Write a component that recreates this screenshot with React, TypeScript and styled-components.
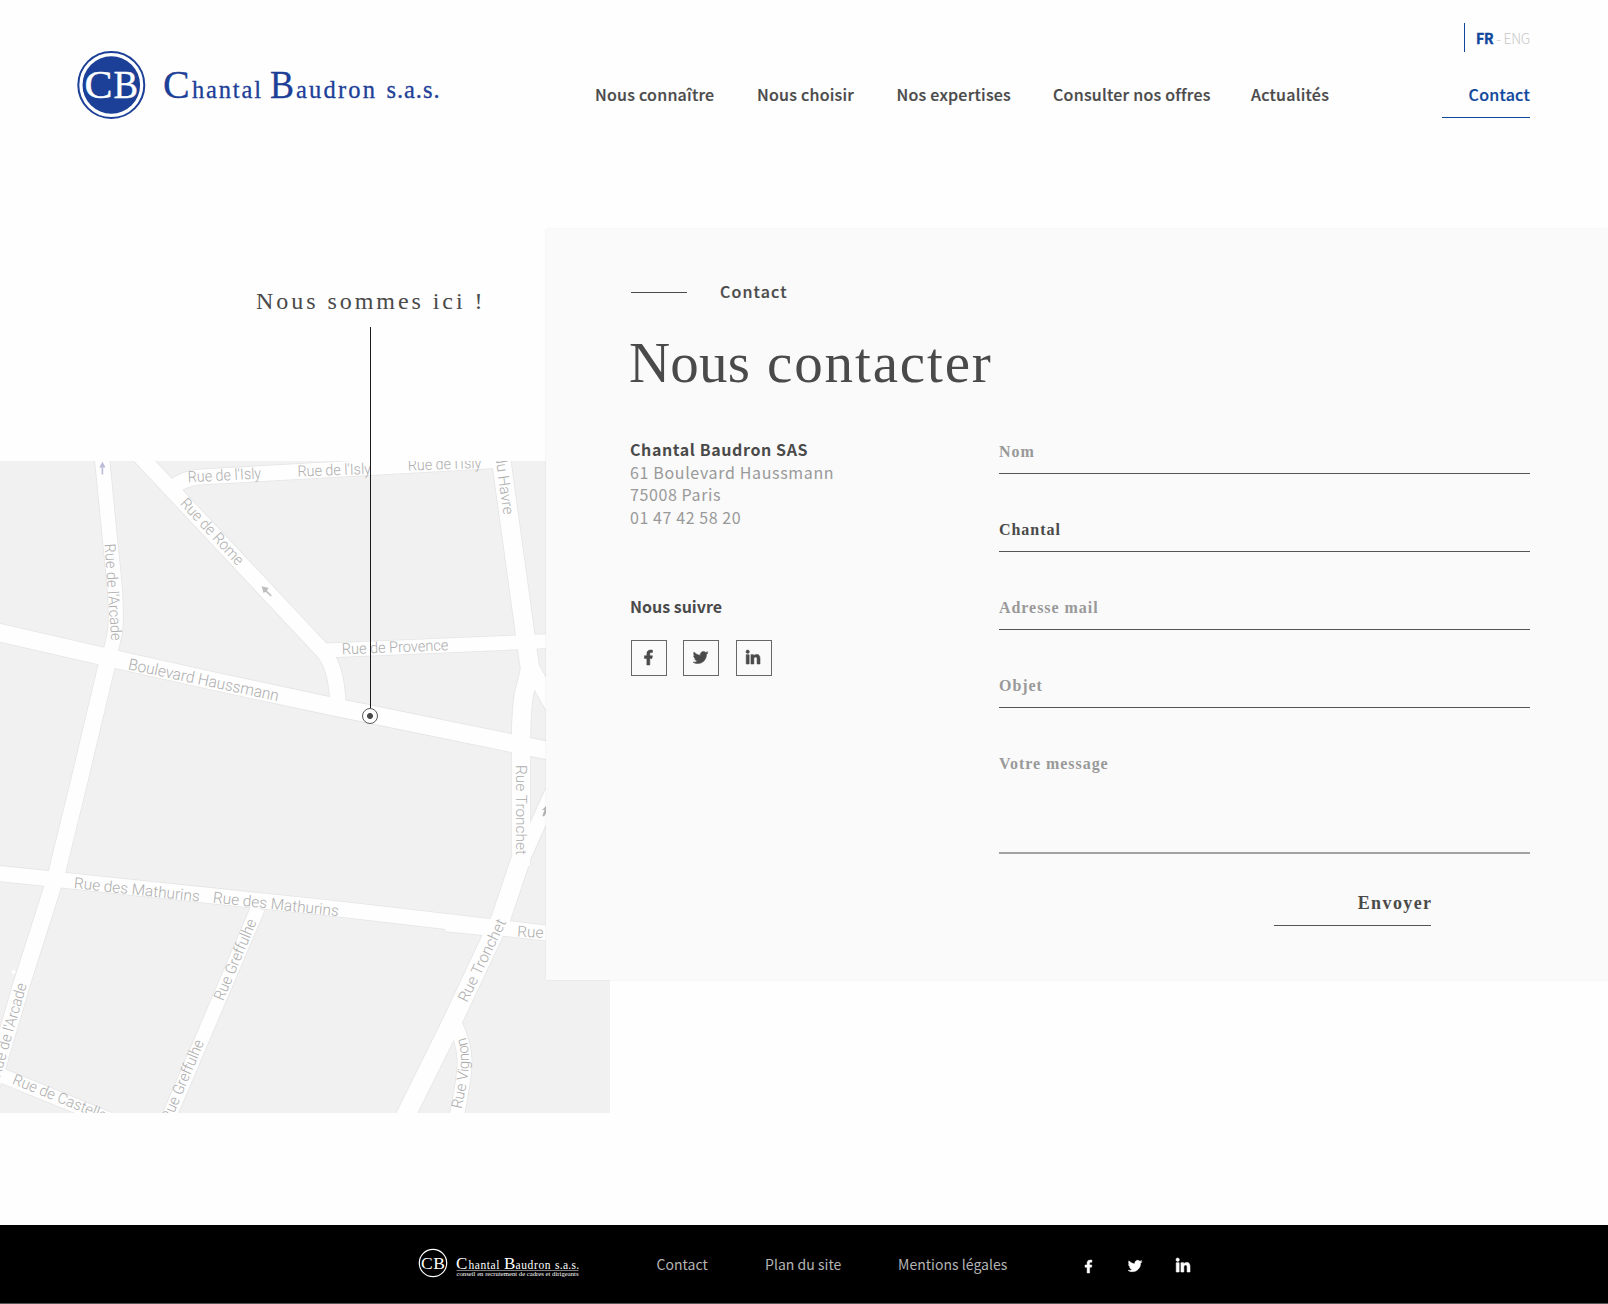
import React from "react";
import styled, { createGlobalStyle } from "styled-components";
import { FaFacebookF, FaTwitter, FaLinkedinIn } from "react-icons/fa";

const sans = `"Noto Sans CJK JP", "Noto Sans", sans-serif`;
const serif = `"Liberation Serif", "Times New Roman", serif`;
const ink = "#4a4a4a";
const muted = "#999999";
const blue = "#0f479d";
const logoBlue = "#1c4097";

const GlobalStyle = createGlobalStyle`
  * { box-sizing: border-box; }
  body { margin: 0; background: #fff; font-family: ${sans}; color: ${ink}; }
`;

const Page = styled.div`
  display: flex;
  flex-direction: column;
  width: 1608px;
  height: 1304px;
  overflow: hidden;
  background: #fefefe;
`;

/* ---------- header ---------- */

const Header = styled.header`
  display: flex;
  justify-content: space-between;
  height: 229px;
  padding: 23px 78px 0 76px;
`;

const LogoLink = styled.a`
  display: block;
  margin-top: 26px;
  height: 72px;
`;

const HeaderSide = styled.div`
  display: flex;
  flex-direction: column;
  align-items: flex-end;
  gap: 32px;
`;

const Languages = styled.div`
  height: 29px;
  padding-left: 11px;
  border-left: 1px solid ${blue};
  font-size: 14px;
  line-height: 30px;
  letter-spacing: -0.25px;
  color: #c8c8c8;
  white-space: pre;
`;

const CurrentLanguage = styled.strong`
  font-weight: 700;
  color: ${blue};
  -webkit-text-stroke: 0.4px ${blue};
`;

const OtherLanguage = styled.span`
  font-weight: 300;
`;

const Nav = styled.nav`
  display: grid;
  grid-template-columns: 162px 139.5px 156.5px 198px 191px 88px;
`;

const NavItem = styled.a<{ $active?: boolean }>`
  height: 34px;
  font-size: 16px;
  font-weight: 500;
  line-height: 20px;
  letter-spacing: 0.24px;
  white-space: nowrap;
  color: ${(p) => (p.$active ? blue : ink)};
  -webkit-text-stroke: 0.2px currentColor;
  text-align: ${(p) => (p.$active ? "right" : "left")};
  border-bottom: ${(p) => (p.$active ? `1px solid ${blue}` : "none")};
`;

/* ---------- main area: the panel overlaps the map ---------- */

const Main = styled.main`
  display: grid;
  grid-template-columns: 545.5px 64.5px 1fr;
  grid-template-rows: 232px 519px 133px;
  height: 884px;
`;

const MapArea = styled.div`
  position: relative;
  grid-column: 1 / 3;
  grid-row: 2 / 4;
  background: #f1f1f1;
  svg { display: block; }
`;

const HereLabel = styled.p`
  grid-column: 1;
  grid-row: 1;
  margin: 55.5px 0 0 256px;
  font-family: ${serif};
  font-size: 24px;
  line-height: 32px;
  letter-spacing: 2.95px;
  white-space: nowrap;
`;

const PinLine = styled.div`
  position: absolute;
  left: 370px;
  top: -134px;
  width: 1px;
  height: 381px;
  background: #1c1c1c;
`;

const Pin = styled.div`
  position: absolute;
  left: 362px;
  top: 247px;
  width: 16px;
  height: 16px;
  border: 1.5px solid #5a5a5a;
  border-radius: 50%;
  background: radial-gradient(circle, #4a4a4a 0 2.6px, #fff 3.3px);
`;

const Panel = styled.section`
  z-index: 1;
  grid-column: 2 / 4;
  grid-row: 1 / 3;
  padding: 50px 78px 0 84.5px;
  background: #fafafa;
  box-shadow: 0 0 2px rgba(0, 0, 0, 0.08);
`;

const Eyebrow = styled.div`
  display: flex;
  align-items: center;
  gap: 33px;
  height: 24px;
  padding-left: 1px;
  font-size: 16px;
  font-weight: 500;
  line-height: 23px;
  letter-spacing: 1.15px;
  -webkit-text-stroke: 0.2px currentColor;
`;

const Dash = styled.span`
  width: 56px;
  height: 1px;
  margin-top: 3px;
  background: ${ink};
`;

const Title = styled.h1`
  margin: 30px 0 46px -1px;
  font-family: ${serif};
  font-size: 57px;
  font-weight: 400;
  line-height: 59px;
`;

const TitleWord = styled.span<{ $spacing: number }>`
  letter-spacing: ${(p) => p.$spacing}px;
  word-spacing: 2.5px;
`;

const Columns = styled.div`
  display: grid;
  grid-template-columns: 369px 531px;
`;

const Address = styled.address`
  font-style: normal;
  font-size: 16px;
  line-height: 22.5px;
  color: ${muted};
`;

const AddressLine = styled.div<{ $spacing: number; $strong?: boolean }>`
  letter-spacing: ${(p) => p.$spacing}px;
  font-weight: ${(p) => (p.$strong ? 700 : 400)};
  color: ${(p) => (p.$strong ? ink : muted)};
`;

const FollowTitle = styled.h2`
  margin: 65.5px 0 22px;
  font-size: 16px;
  font-weight: 700;
  line-height: 24px;
`;

const FollowRow = styled.div`
  display: flex;
  gap: 16.6px;
  padding-left: 0.6px;
`;

const FollowLink = styled.a`
  display: flex;
  align-items: center;
  justify-content: center;
  width: 36px;
  height: 36px;
  padding: 0 1px 0 0;
  border: 1px solid #666;
  color: ${ink};
  svg { stroke: currentColor; stroke-width: 18px; overflow: visible; }
`;

const Form = styled.form`
  display: flex;
  flex-direction: column;
  gap: 43px;
  padding-top: 1px;
`;

const fieldStyle = `
  display: block;
  width: 100%;
  margin: 0;
  border: 0;
  border-radius: 0;
  outline: 0;
  background: transparent;
  font-family: ${serif};
  font-size: 16px;
  font-weight: 700;
  line-height: 24px;
  letter-spacing: 0.95px;
  color: ${ink};
  &::placeholder { color: ${muted}; opacity: 1; }
`;

const Field = styled.input`
  ${fieldStyle}
  height: 35px;
  padding: 1px 0 9px;
  border-bottom: 1px solid #555;
`;

const Message = styled.textarea`
  ${fieldStyle}
  height: 103px;
  padding: 1px 0 0;
  resize: none;
  overflow: hidden;
  border-bottom: 2px solid #a2a2a2;
`;

const Submit = styled.button`
  width: 157px;
  height: 36px;
  margin: -7px 99.5px 0 auto;
  padding: 1px 0 10px;
  border: 0;
  border-bottom: 1px solid #555;
  background: transparent;
  font-family: ${serif};
  font-size: 18px;
  font-weight: 700;
  line-height: 24px;
  letter-spacing: 1.4px;
  color: ${ink};
  text-align: right;
`;

const SubmitText = styled.span`
  margin-right: -2px;
`;

/* ---------- footer ---------- */

const Footer = styled.footer`
  display: flex;
  align-items: center;
  height: 79px;
  margin-top: 112px;
  padding-left: 418px;
  background: #000;
  border-bottom: 1px solid #555;
`;

const FooterLogo = styled.div`
  width: 238.5px;
  height: 32px;
  margin-top: -2px;
`;

const FooterNav = styled.nav`
  display: grid;
  grid-template-columns: 108.5px 133px 183px;
`;

const FooterLink = styled.a`
  font-size: 14px;
  line-height: 24px;
  letter-spacing: 0.03px;
  color: #b4b4b4;
  white-space: nowrap;
`;

const FooterSocial = styled.div`
  display: flex;
  align-items: center;
  gap: 33px;
  padding: 4px 0 0 0.5px;
  color: #fff;
  svg { stroke: currentColor; stroke-width: 18px; overflow: visible; }
`;

/* ---------- drawings ---------- */

function Logo() {
  return (
    <svg width="366" height="72" viewBox="76 49 366 72" fontFamily={serif} fill={logoBlue}>
      <circle cx="111.3" cy="85" r="33" fill="#fff" stroke={logoBlue} strokeWidth="2" />
      <circle cx="111.3" cy="85" r="28.8" />
      <g fill="#fff" stroke="#fff" strokeWidth="0.4">
        <text x="84.5" y="98" fontSize="39" textLength="28" lengthAdjust="spacingAndGlyphs">C</text>
        <text x="113.6" y="98" fontSize="39" textLength="24.5" lengthAdjust="spacingAndGlyphs">B</text>
      </g>
      <g stroke={logoBlue} strokeWidth="0.3">
        <text x="163" y="97.7" fontSize="40" textLength="27">C</text>
        <text x="192" y="97.7" fontSize="24.5" textLength="69">hantal</text>
        <text x="270" y="97.7" fontSize="40" textLength="24" lengthAdjust="spacingAndGlyphs">B</text>
        <text x="296" y="97.7" fontSize="24.5" textLength="79">audron</text>
        <text x="386.5" y="97.7" fontSize="24.5" textLength="53">s.a.s.</text>
      </g>
    </svg>
  );
}

function SmallLogo() {
  return (
    <svg width="164" height="32" viewBox="418 1247 164 32" fontFamily={serif} fill="#fff">
      <circle cx="433" cy="1263" r="13.7" fill="none" stroke="#fff" strokeWidth="1.2" />
      <text x="421" y="1268.8" fontSize="17.5" textLength="24">CB</text>
      <text x="456" y="1268.5" fontSize="17" textLength="11.5">C</text>
      <text x="468.5" y="1268.5" fontSize="11.5" textLength="31">hantal</text>
      <text x="504" y="1268.5" fontSize="17" textLength="11">B</text>
      <text x="515.5" y="1268.5" fontSize="11.5" textLength="35">audron</text>
      <text x="555" y="1268.5" fontSize="11.5" textLength="24">s.a.s.</text>
      <rect x="456.5" y="1270.2" width="122" height="0.7" opacity="0.7" />
      <text x="456.5" y="1276.4" fontSize="6.8" textLength="122" lengthAdjust="spacingAndGlyphs">
        conseil en recrutement de cadres et dirigeants
      </text>
    </svg>
  );
}

const roads: { d: string; w: number }[] = [
  { d: "M-5 631.6 L110 658 L220 682.5 L330 706 L550 751", w: 17.6 },
  { d: "M101.7 455 L114 580 Q117 612 115 632 L108 664", w: 14.3 },
  { d: "M108 660 L79.5 780 L57 872 L51 892 L22 983 L-8 1085", w: 16.4 },
  { d: "M-5 873 L66 880.5 L330 908 L550 933.5", w: 15.2 },
  { d: "M446 923.5 L496 928.5", w: 15.5 },
  { d: "M-2 1074 L108 1119", w: 14 },
  { d: "M258 908 L168 1119", w: 14 },
  { d: "M139 455 L322 650 Q337 666 338 706", w: 15.3 },
  { d: "M172 488 Q184 478 200 477 L330 469.8 L497 460.5", w: 15 },
  { d: "M500.5 455 L525 633 L531 676", w: 18.5 },
  { d: "M530.5 668 L524 694 Q521 712 521 745 L521 866", w: 18.4 },
  { d: "M529 664 L562 722", w: 16 },
  { d: "M325 650.5 L550 641", w: 14 },
  { d: "M520.5 860 L501 918 L451.5 1023 L404 1119", w: 18.8 },
  { d: "M519 866 L552 793", w: 15 },
  { d: "M452 1018 Q466 1045 464.5 1065 Q464 1080 456 1120", w: 14 },
];

interface Label {
  text: string;
  x: number;
  y: number;
  angle: number;
  length?: number;
  size?: number;
}

const labels: Label[] = [
  { text: "Rue de l'Isly", x: 188, y: 482.3, angle: -3, length: 73.5 },
  { text: "Rue de l'Isly", x: 297.7, y: 476.5, angle: -2, length: 73.5 },
  { text: "Rue de l'Isly", x: 408, y: 470.5, angle: -2, length: 73.5 },
  { text: "Rue de Rome", x: 179.5, y: 504, angle: 47, length: 85 },
  { text: "Rue de l'Arcade", x: 104.5, y: 544, angle: 86, length: 97 },
  { text: "Boulevard Haussmann", x: 127.5, y: 669.3, angle: 12, length: 153.5, size: 16 },
  { text: "du Havre", x: 495.2, y: 456, angle: 82, length: 59.5 },
  { text: "Rue de Provence", x: 342, y: 654.3, angle: -2.2, length: 106.5 },
  { text: "Rue Tronchet", x: 515.8, y: 765, angle: 90, length: 90 },
  { text: "Rue Tronchet", x: 467, y: 1003, angle: -64, length: 90 },
  { text: "Rue des Mathurins", x: 517, y: 936.5, angle: 3, length: 126 },
  { text: "Rue des Mathurins", x: 73.5, y: 888, angle: 6.2, length: 126.5 },
  { text: "Rue des Mathurins", x: 212.5, y: 902.5, angle: 6.2, length: 126.5 },
  { text: "Rue Greffulhe", x: 223, y: 1001.5, angle: -67, length: 86.5 },
  { text: "Rue Greffulhe", x: 170.5, y: 1122, angle: -67, length: 86.5 },
  { text: "Rue de l'Arcade", x: 0, y: 1078, angle: -74, length: 97 },
  { text: "Rue de Castellane", x: 11.5, y: 1083.5, angle: 22, length: 116 },
];

function StreetMap() {
  return (
    <svg width="610" height="652" viewBox="0 461 610 652">
      <g fill="none" stroke="#e5e5e5">
        {roads.map((r, i) => (
          <path key={i} d={r.d} strokeWidth={r.w + 1.6} />
        ))}
      </g>
      <g fill="none" stroke="#fefefe">
        {roads.map((r, i) => (
          <path key={i} d={r.d} strokeWidth={r.w} />
        ))}
      </g>
      <circle cx="13.5" cy="972" r="2" fill="#fff" />
      <path d="M101.6 474.5 V467.5 H99.2 L102.4 461.8 L105.6 467.5 H103.2 V474.5 Z" fill="#bcbcda" />
      <path d="M271.8 595.4 L266.8 590.6 L268.8 588 L261.6 586.2 L263.6 593 L265.6 591.8 L270.8 596.6 Z" fill="#bdbdbd" />
      <path d="M542.3 816 L544.6 809.6 L541.6 810.4 L547 805 V812 L544 816.6 Z" fill="#b5b5b5" />
      <g fontFamily="Roboto, sans-serif" fontWeight="300" fill="#adadad">
        {labels.map((l, i) => (
          <text
            key={i}
            fontSize={l.size ?? 15.3}
            textLength={l.length}
            lengthAdjust="spacingAndGlyphs"
            transform={`translate(${l.x} ${l.y}) rotate(${l.angle})`}
          >
            {l.text}
          </text>
        ))}
        <path id="vignon" d="M461.5 1109 C465.5 1088 474.5 1058 464 1033" fill="none" />
        <text fontSize="15">
          <textPath href="#vignon" textLength="73">Rue Vignon</textPath>
        </text>
      </g>
    </svg>
  );
}

const navItems = [
  "Nous connaître",
  "Nous choisir",
  "Nos expertises",
  "Consulter nos offres",
  "Actualités",
];

export default function App() {
  return (
    <Page>
      <GlobalStyle />
      <Header>
        <LogoLink>
          <Logo />
        </LogoLink>
        <HeaderSide>
          <Languages>
            <CurrentLanguage>FR</CurrentLanguage>
            <OtherLanguage> - ENG</OtherLanguage>
          </Languages>
          <Nav>
            {navItems.map((label) => (
              <NavItem key={label}>{label}</NavItem>
            ))}
            <NavItem $active>Contact</NavItem>
          </Nav>
        </HeaderSide>
      </Header>

      <Main>
        <HereLabel>Nous sommes ici !</HereLabel>
        <MapArea>
          <StreetMap />
          <PinLine />
          <Pin />
        </MapArea>
        <Panel>
          <Eyebrow>
            <Dash />
            Contact
          </Eyebrow>
          <Title>
            <TitleWord $spacing={0.2}>Nous </TitleWord>
            <TitleWord $spacing={1.85}>contacter</TitleWord>
          </Title>
          <Columns>
            <div>
              <Address>
                <AddressLine $strong $spacing={0.6}>Chantal Baudron SAS</AddressLine>
                <AddressLine $spacing={0.65}>61 Boulevard Haussmann</AddressLine>
                <AddressLine $spacing={0.6}>75008 Paris</AddressLine>
                <AddressLine $spacing={0.58}>01 47 42 58 20</AddressLine>
              </Address>
              <FollowTitle>Nous suivre</FollowTitle>
              <FollowRow>
                <FollowLink><FaFacebookF size={15} /></FollowLink>
                <FollowLink><FaTwitter size={15} /></FollowLink>
                <FollowLink><FaLinkedinIn size={16} /></FollowLink>
              </FollowRow>
            </div>
            <Form>
              <Field placeholder="Nom" />
              <Field defaultValue="Chantal" />
              <Field placeholder="Adresse mail" />
              <Field placeholder="Objet" />
              <Message placeholder="Votre message" />
              <Submit type="button">
                <SubmitText>Envoyer</SubmitText>
              </Submit>
            </Form>
          </Columns>
        </Panel>
      </Main>

      <Footer>
        <FooterLogo>
          <SmallLogo />
        </FooterLogo>
        <FooterNav>
          <FooterLink>Contact</FooterLink>
          <FooterLink>Plan du site</FooterLink>
          <FooterLink>Mentions légales</FooterLink>
        </FooterNav>
        <FooterSocial>
          <FaFacebookF size={13} />
          <FaTwitter size={14} />
          <FaLinkedinIn size={16} />
        </FooterSocial>
      </Footer>
    </Page>
  );
}
